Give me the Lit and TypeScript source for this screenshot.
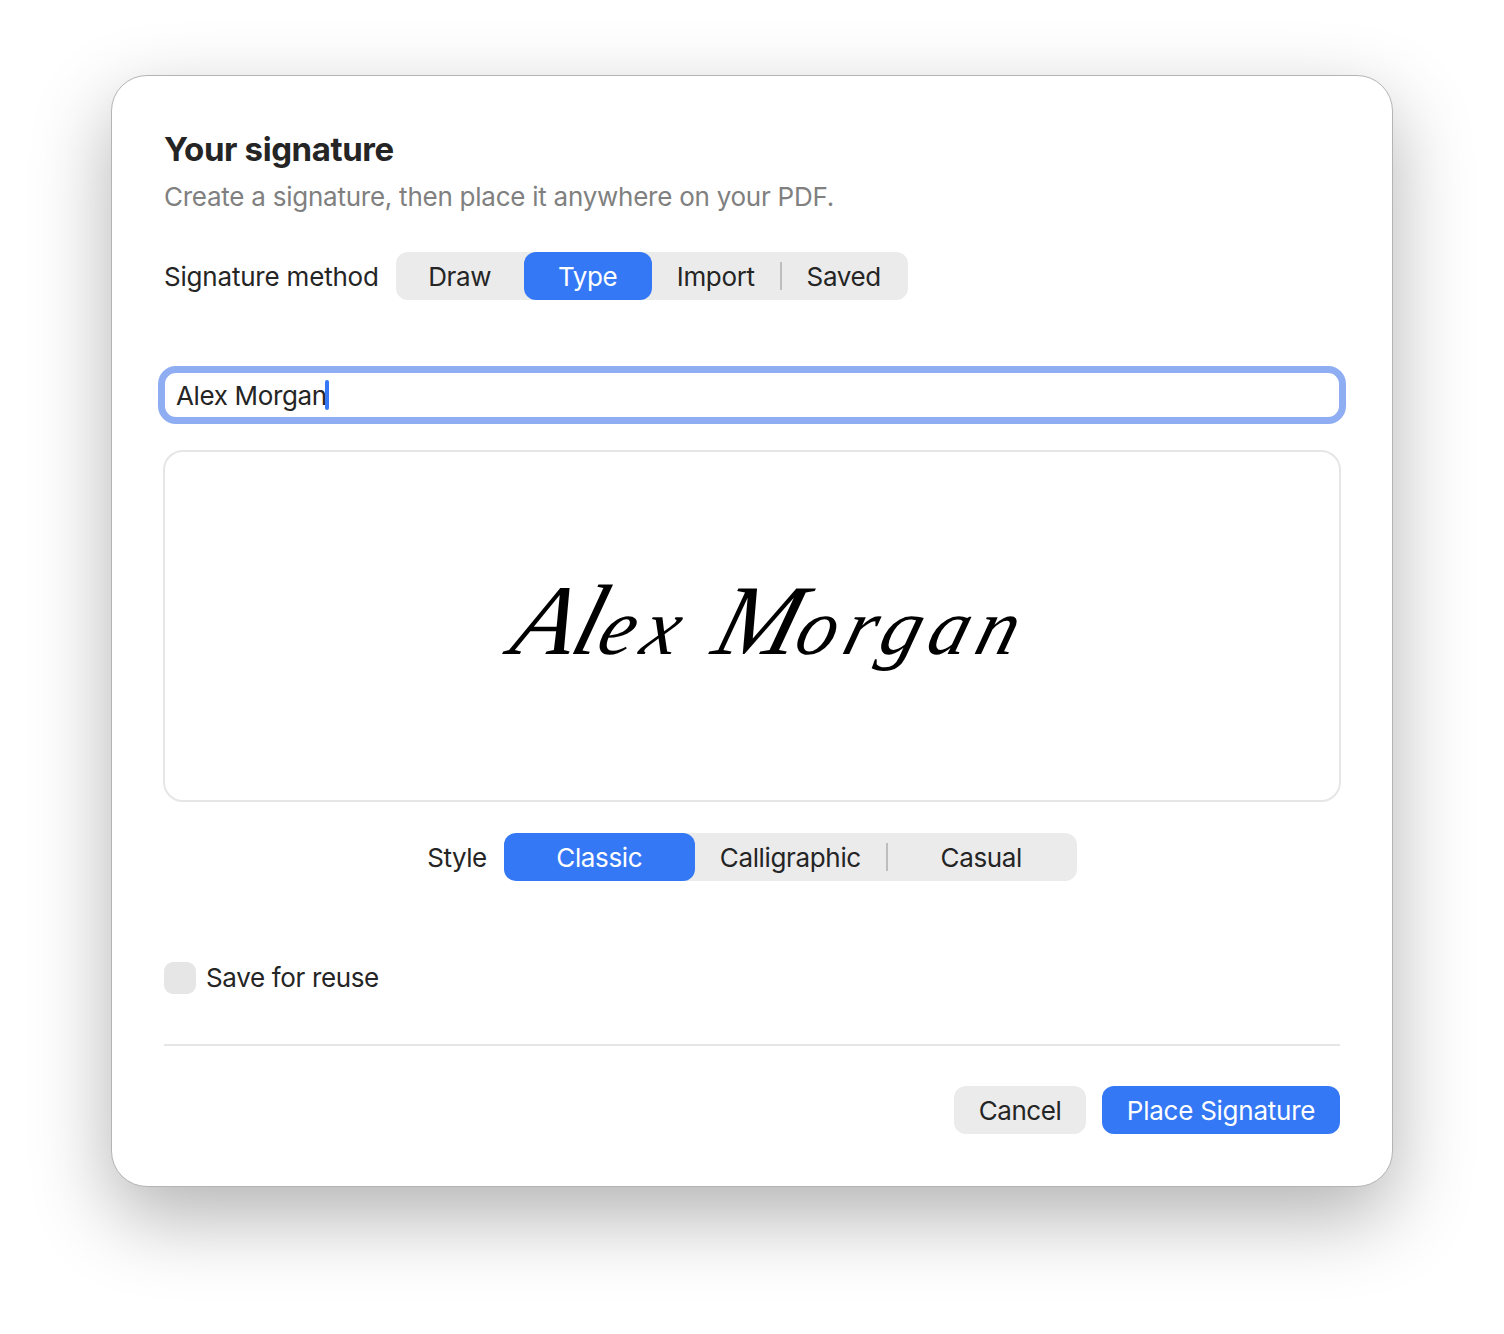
import { LitElement, html, css } from "lit";
import { customElement } from "lit/decorators.js";

@customElement("seg-control")
class SegControl extends LitElement {
  static properties = { items: { type: Array }, active: { type: Number }, sep: { type: Number }, w: { type: Number } };
  items: string[] = [];
  active = 0;
  sep = 0;
  w = 128;
  static styles = css`
    :host { display: inline-flex; background: #ebebeb; border-radius: 12px; height: 48px; }
    .item {
      box-sizing: border-box; padding-top: 2px;
      position: relative; height: 48px; display: flex; align-items: center; justify-content: center;
      border-radius: 12px; color: #252525; font: 400 26px/32px Inter, sans-serif; letter-spacing: -0.35px;
    }
    .item.on { background: #3478f6; color: #fff; }
    .item.sep::after {
      content: ""; position: absolute; right: -2px; top: 10px; width: 2px; height: 28px; background: #bdbdbd;
    }
  `;
  render() {
    return this.items.map((t, i) => html`<div class="item ${i === this.active ? "on" : ""} ${i === this.sep ? "sep" : ""}" style="width:${this.w}px">${t}</div>`);
  }
}

@customElement("app-root")
class AppRoot extends LitElement {
  static styles = css`
    :host { display: block; height: 1334px; box-sizing: border-box; padding: 75px 111px 0; background: #fff; font-family: Inter, sans-serif; color: #252525; overflow: hidden; }
    .dialog {
      box-sizing: border-box; width: 1282px; height: 1112px; background: #fff; border: 1px solid #b4b4b4; border-radius: 36px;
      box-shadow: 0 30px 80px 0 rgba(0,0,0,.3); padding: 55px 52px 0; display: flex; flex-direction: column;
    }
    h1 { margin: 0; font: 700 33px/36px Inter, sans-serif; letter-spacing: -0.4px; color: #252525; }
    .sub { margin-top: 14px; font: 400 26px/32px Inter, sans-serif; letter-spacing: -0.25px; color: #808080; }
    .label { font: 400 26px/32px Inter, sans-serif; letter-spacing: -0.45px; color: #252525; padding-top: 2px; }
    .label.method { letter-spacing: -0.2px; }
    .row { display: flex; align-items: center; gap: 17px; margin-top: 39px; }
    .input {
      box-sizing: border-box; margin: 66px -6px 0; height: 58px; border: 7px solid #8fadf2; border-radius: 18px; background: #fff;
      padding: 2px 11px 0; display: flex; align-items: center; font: 400 26px/32px Inter, sans-serif; letter-spacing: -0.35px;
    }
    .caret { display: inline-block; width: 4px; height: 30px; border-radius: 2px; background: #3478f6; margin: -2px 0 0 -2px; }
    .preview {
      box-sizing: border-box; height: 352px; margin: 26px -1px 0; border: 2px solid #e6e6e6; border-radius: 20px;
      display: flex; align-items: center; justify-content: center; padding-left: 40px;
    }
    .sig { font: italic 400 80px/120px "Liberation Serif", serif; letter-spacing: 8px; color: #000; white-space: nowrap; transform: skewX(-16deg); position: relative; top: -2px; }
    .sig b { font-weight: 400; font-size: 100px; letter-spacing: -1px; }
    .style-row { justify-content: center; margin-top: 31px; }
    .check { display: flex; align-items: center; gap: 10px; margin-top: 81px; }
    .check .label { padding-top: 0; letter-spacing: -0.35px; }
    .box { width: 32px; height: 32px; border-radius: 9px; background: #e6e6e6; }
    .rule { height: 2px; background: #e6e6e6; margin-top: 50px; }
    .actions { display: flex; justify-content: flex-end; gap: 16px; margin-top: 40px; }
    .btn { box-sizing: border-box; padding-top: 2px; height: 48px; display: flex; align-items: center; justify-content: center; border-radius: 12px; font: 400 26px/32px Inter, sans-serif; letter-spacing: -0.45px; }
    .cancel { width: 132px; background: #ebebeb; color: #252525; }
    .place { width: 238px; background: #3478f6; color: #fff; letter-spacing: -0.25px; }
  `;
  render() {
    return html`<div class="dialog">
      <h1>Your signature</h1>
      <div class="sub">Create a signature, then place it anywhere on your PDF.</div>
      <div class="row">
        <span class="label method">Signature method</span>
        <seg-control .items=${["Draw", "Type", "Import", "Saved"]} .active=${1} .sep=${2} .w=${128}></seg-control>
      </div>
      <div class="input"><span>Alex Morgan</span><span class="caret"></span></div>
      <div class="preview"><div class="sig"><b>Al</b>ex <b>M</b>organ</div></div>
      <div class="row style-row">
        <span class="label">Style</span>
        <seg-control .items=${["Classic", "Calligraphic", "Casual"]} .active=${0} .sep=${1} .w=${191}></seg-control>
      </div>
      <div class="check"><div class="box"></div><span class="label">Save for reuse</span></div>
      <div class="rule"></div>
      <div class="actions">
        <div class="btn cancel">Cancel</div>
        <div class="btn place">Place Signature</div>
      </div>
    </div>`;
  }
}
